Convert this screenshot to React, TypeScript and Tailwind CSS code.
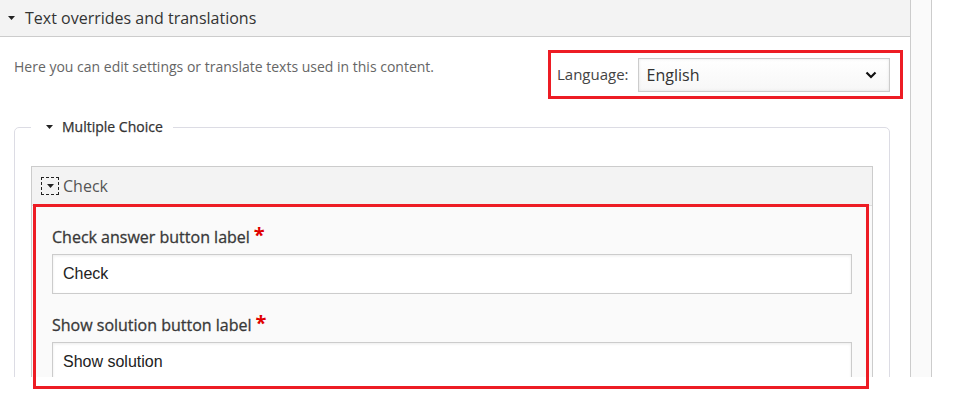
import React from "react";

const Caret = ({ className = "" }: { className?: string }) => (
  <svg width="7" height="4" viewBox="0 0 7 4" className={className}>
    <path d="M0 0h7L3.5 4z" fill="#222" />
  </svg>
);

function Field({ label, value }: { label: string; value: string }) {
  return (
    <div className="mb-[21px]">
      <div className="mb-[7px] text-[16px] leading-[20px] text-[#383838] [-webkit-text-stroke:0.3px_#383838]">
        {label}
        <span className="ml-[4px] inline-block align-top text-[20px] leading-[16px] font-bold text-[#e00000] [-webkit-text-stroke:0]">*</span>
      </div>
      <div className="flex h-[40px] items-center border border-[#cccccc] bg-white px-[10px] text-[16px] text-[#222] shadow-[inset_0_1px_3px_rgba(0,0,0,0.08)] [font-family:'Liberation_Sans',Arial,sans-serif]">
        {value}
      </div>
    </div>
  );
}

export default function App() {
  return (
    <div className="relative h-[396px] w-[965px] overflow-hidden bg-white [font-family:'Open_Sans',sans-serif]">
      <div className="flex h-[377px] overflow-hidden">
        <div className="flex w-[911px] shrink-0 flex-col border-r border-[#cccccc]">
          <div className="flex h-[37px] shrink-0 items-center gap-[10px] border-b border-[#cccccc] bg-[#f3f3f3] pl-[8px] text-[16px] text-[#333]">
            <Caret />
            <span>Text overrides and translations</span>
          </div>

          <div className="flex items-start justify-between pl-[14px] pr-[7px] pt-[13px]">
            <div className="pt-[7px] text-[14px] leading-[20px] text-[#666]">
              Here you can edit settings or translate texts used in this content.
            </div>
            <div className="flex h-[49px] w-[355px] items-center border-[3px] border-[#ed1c24] pl-[6px]">
              <span className="mr-[9px] text-[15px] text-[#444]">Language:</span>
              <div className="flex h-[34px] w-[252px] items-center justify-between border border-[#cccccc] bg-[linear-gradient(#ffffff,#f7f7f7)] pl-[8px] pr-[12px] text-[16px] text-[#333] shadow-[inset_0_0_3px_rgba(0,0,0,0.1)]">
                <span>English</span>
                <svg width="12" height="8" viewBox="0 0 12 8">
                  <path d="M1.5 1.5l4.5 4.5 4.5-4.5" fill="none" stroke="#111" strokeWidth="2.2" />
                </svg>
              </div>
            </div>
          </div>

          <fieldset className="ml-[14px] mt-[18px] w-[876px] rounded-[5px] border border-[#dcdce4] px-[16px] pt-[29px]">
            <legend className="flex h-[20px] items-center gap-[9px] pl-[15px] pr-[10px] text-[14px] leading-[20px] text-[#333] [-webkit-text-stroke:0.25px_#333]">
              <Caret />
              <span>Multiple Choice</span>
            </legend>
            <div className="border border-[#cccccc]">
              <div className="flex h-[39px] items-center gap-[4px] border-b border-[#dddddd] bg-[#f3f3f3] pl-[9px] text-[16px] text-[#555]">
                <span className="flex h-[18px] w-[18px] items-center justify-center border border-dashed border-[#222]">
                  <Caret />
                </span>
                <span>Check</span>
              </div>
              <div className="bg-[#fafafa] px-[20px] pt-[21px]">
                <Field label="Check answer button label" value="Check" />
                <Field label="Show solution button label" value="Show solution" />
              </div>
            </div>
          </fieldset>
        </div>
        <div className="w-[21px] shrink-0 border-r border-[#cccccc] bg-[#fafafa]" />
      </div>
      <div className="pointer-events-none absolute left-[33px] top-[204px] h-[185px] w-[836px] border-[3px] border-[#ed1c24]" />
    </div>
  );
}
